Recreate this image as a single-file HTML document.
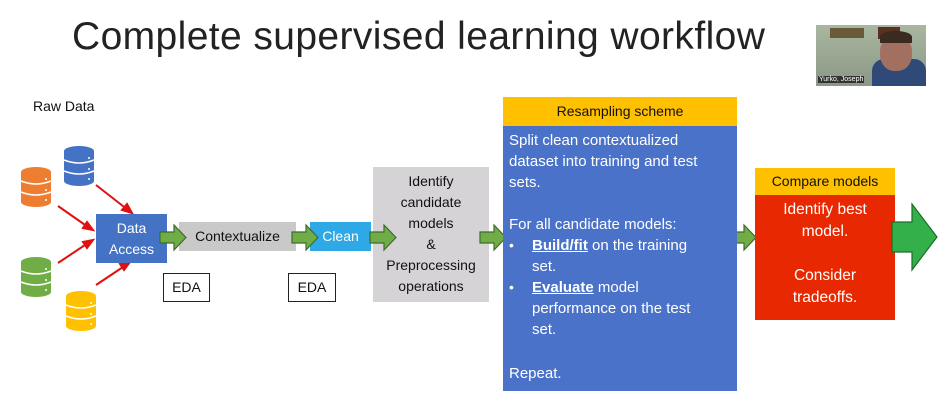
<!DOCTYPE html>
<html><head><meta charset="utf-8"><style>
*{margin:0;padding:0;box-sizing:border-box}
body{width:941px;height:410px;background:#fff;position:relative;overflow:hidden;font-family:"Liberation Sans",sans-serif}
.a{position:absolute}
.t{font-size:14px;line-height:21px}
.c{text-align:center}
</style></head><body>
<div class="a" style="left:72px;top:15px;font-size:39px;color:#222;letter-spacing:0.4px">Complete supervised learning workflow</div>
<div class="a" style="left:816px;top:25px;width:110px;height:61px;background:#6f7d6a;overflow:hidden">
 <div class="a" style="left:0;top:0;width:110px;height:61px;background:linear-gradient(#a9b6a0,#8a9886)"></div>
 <div class="a" style="left:14px;top:3px;width:34px;height:10px;background:#6a5a3a"></div>
 <div class="a" style="left:62px;top:2px;width:22px;height:12px;background:#5a3020"></div>
 <div class="a" style="left:56px;top:34px;width:54px;height:27px;background:#2f4a78;border-radius:12px 12px 0 0"></div>
 <div class="a" style="left:64px;top:10px;width:32px;height:36px;background:#a27060;border-radius:45%"></div>
 <div class="a" style="left:64px;top:6px;width:32px;height:12px;background:#3a2a20;border-radius:50% 50% 0 0"></div>
 <div class="a" style="left:2px;top:51px;font-size:7px;color:#fff;background:#333;padding:0 1px">Yurko, Joseph</div>
</div>
<div class="a" style="left:33px;top:98px;font-size:14px;color:#111">Raw Data</div>
<svg class="a" style="left:0;top:0" width="941" height="410">
 <defs>
  <g id="db"><ellipse cx="16" cy="5" rx="15" ry="5"/><rect x="1" y="5" width="30" height="30"/><ellipse cx="16" cy="35" rx="15" ry="5"/>
   <path d="M1 14 Q16 20 31 14 M1 25 Q16 31 31 25" stroke="#fff" stroke-width="1.5" fill="none"/>
   <circle cx="26" cy="12" r="1" fill="#fff"/><circle cx="26" cy="23" r="1" fill="#fff"/><circle cx="26" cy="33" r="1" fill="#fff"/></g>
  <polygon id="ar" points="0,7 14,7 14,0 26,12.5 14,25 14,18 0,18" fill="#70ad47" stroke="#3f6b2a" stroke-width="1.2"/>
 </defs>
 <use href="#db" x="63" y="146" fill="#4472c4"/>
 <use href="#db" x="20" y="167" fill="#ed7d31"/>
 <use href="#db" x="20" y="257" fill="#70ad47"/>
 <use href="#db" x="65" y="291" fill="#ffc000"/>
 <g stroke="#e01010" stroke-width="2" fill="#e01010">
  <line x1="96" y1="185" x2="128" y2="210"/><polygon points="132,213 122,210 127,204"/>
  <line x1="58" y1="206" x2="88" y2="227"/><polygon points="93,230 83,228 87,222"/>
  <line x1="58" y1="263" x2="88" y2="243"/><polygon points="93,240 87,248 83,242"/>
  <line x1="96" y1="285" x2="126" y2="265"/><polygon points="130,262 124,270 120,264"/>
 </g>
 <rect x="96" y="214" width="71" height="49" fill="#4472c4"/>
 <rect x="179" y="222" width="117" height="29" fill="#c9c9c9"/>
 <rect x="310" y="222" width="61" height="29" fill="#2ea9e6"/>
 <rect x="373" y="167" width="116" height="135" fill="#d6d3d6"/>
 <use href="#ar" x="160" y="225"/>
 <use href="#ar" x="292" y="225"/>
 <use href="#ar" x="370" y="225"/>
 <use href="#ar" x="480" y="225"/>
 <use href="#ar" x="730" y="225"/>
 <rect x="503" y="97" width="234" height="29" fill="#ffc000"/>
 <rect x="503" y="126" width="234" height="265" fill="#4a72c8"/>
 <rect x="755" y="168" width="140" height="27" fill="#ffc000"/>
 <rect x="755" y="195" width="140" height="125" fill="#e82800"/>
 <polygon points="892,222 912,222 912,204 937,237 912,270 912,252 892,252" fill="#33b04a" stroke="#1f6b2a" stroke-width="1.2"/>
 <rect x="163.5" y="273.5" width="46" height="28" fill="#fff" stroke="#222"/>
 <rect x="288.5" y="273.5" width="47" height="28" fill="#fff" stroke="#222"/>
</svg>
<div class="a t c" style="left:96px;top:218px;width:71px;color:#fff">Data<br>Access</div>
<div class="a t c" style="left:179px;top:226px;width:117px;color:#111">Contextualize</div>
<div class="a t c" style="left:310px;top:226px;width:61px;color:#fff">Clean</div>
<div class="a t c" style="left:163px;top:277px;width:47px;color:#111">EDA</div>
<div class="a t c" style="left:288px;top:277px;width:48px;color:#111">EDA</div>
<div class="a t c" style="left:373px;top:171px;width:116px;color:#111">Identify<br>candidate<br>models<br>&amp;<br>Preprocessing<br>operations</div>
<div class="a t c" style="left:503px;top:101px;width:234px;color:#111">Resampling scheme</div>
<div class="a t" style="left:509px;top:130px;width:228px;color:#fff;font-size:15px">Split clean contextualized<br>dataset into training and test<br>sets.<br><br>For all candidate models:</div>
<div class="a t" style="left:509px;top:235px;color:#fff">•<br><br>•</div>
<div class="a t" style="left:532px;top:235px;color:#fff;font-size:15px"><b><u>Build/fit</u></b> on the training<br>set.<br><b><u>Evaluate</u></b> model<br>performance on the test<br>set.</div>
<div class="a t" style="left:509px;top:363px;color:#fff;font-size:15px">Repeat.</div>
<div class="a t c" style="left:755px;top:171px;width:140px;color:#111">Compare models</div>
<div class="a c" style="left:755px;top:199px;width:140px;color:#fff;font-size:15.5px;line-height:22px">Identify best<br>model.<br><br>Consider<br>tradeoffs.</div>
</body></html>
